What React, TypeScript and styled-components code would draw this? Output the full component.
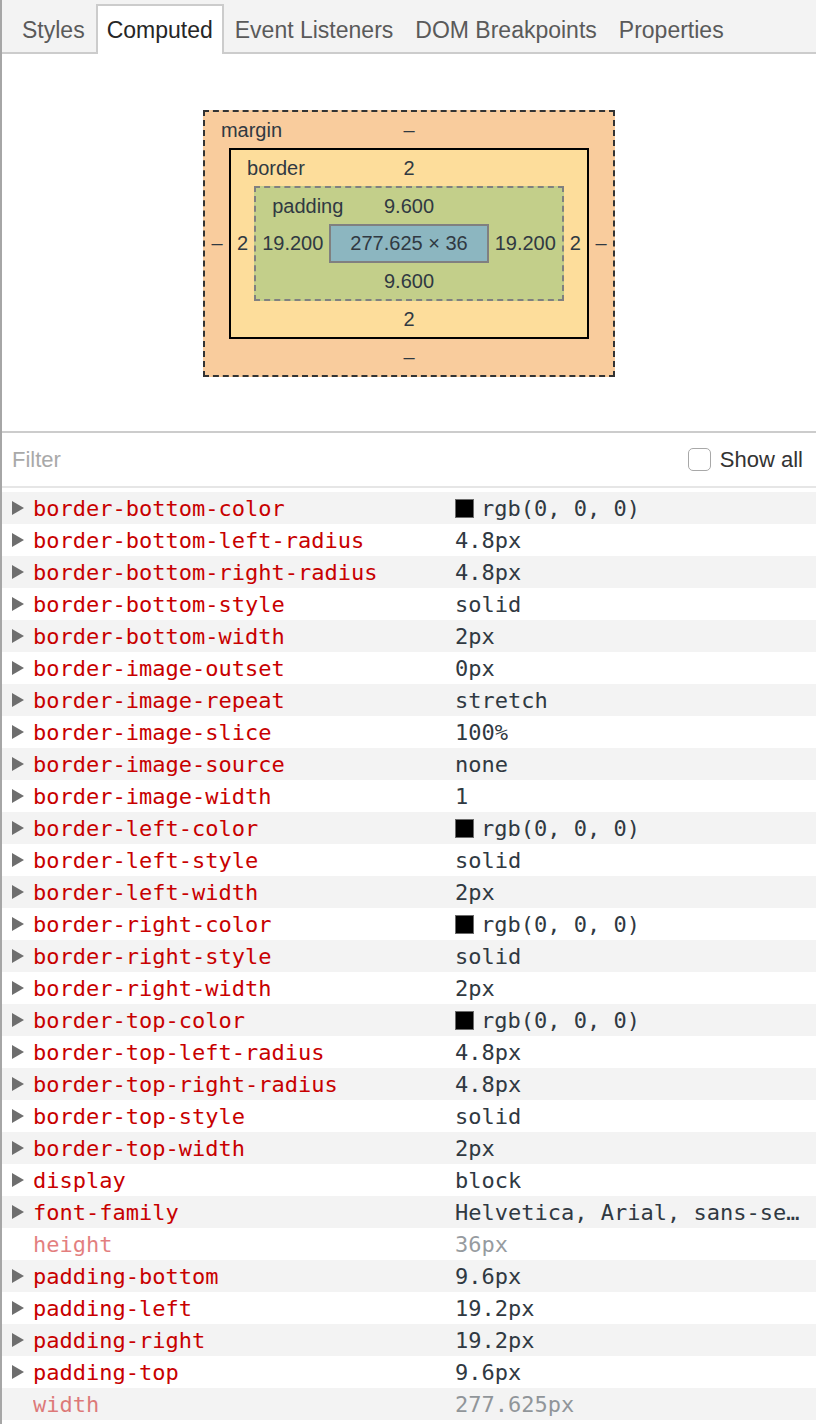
import styled, { createGlobalStyle } from "styled-components";

type BoxKind = "margin" | "border" | "padding";

type Property = {
  name: string;
  value: string;
  swatch?: string;
  inherited?: boolean;
};

const GlobalStyle = createGlobalStyle`
  body {
    margin: 0;
    background: #ffffff;
  }
  * {
    box-sizing: border-box;
  }
`;

const Panel = styled.div`
  border-left: 2px solid #a6a6a6;
  min-height: 1424px;
  background: #ffffff;
  font-family: "Liberation Sans", Arial, sans-serif;
  color: #303942;
`;

const TabBar = styled.div`
  display: flex;
  align-items: flex-end;
  height: 54px;
  padding-left: 9px;
  background: #f3f3f3;
  border-bottom: 2px solid #cccccc;
`;

const Tab = styled.div<{ $active?: boolean }>`
  height: 50px;
  margin-bottom: -2px;
  padding: 0 9px;
  display: flex;
  align-items: center;
  font-size: 23px;
  color: ${(p) => (p.$active ? "#262626" : "#5a5a5a")};
  background: ${(p) => (p.$active ? "#ffffff" : "transparent")};
  border: 2px solid ${(p) => (p.$active ? "#cccccc" : "transparent")};
  border-bottom: none;
`;

const BoxModelSection = styled.section`
  display: flex;
  justify-content: center;
  padding: 56px 0 54px;
  border-bottom: 2px solid #cccccc;
`;

const boxStyles: Record<BoxKind, string> = {
  margin: "background: #f9cc9d; border: 2px dashed #333333;",
  border: "background: #fddd9b; border: 2px solid #000000;",
  padding: "background: #c3cf8a; border: 2px dashed #808080;",
};

const Box = styled.div<{ $kind: BoxKind }>`
  display: flex;
  flex-direction: column;
  font-size: 20px;
  color: #303942;
  ${(p) => boxStyles[p.$kind]}
`;

const EdgeRow = styled.div`
  display: grid;
  grid-template-columns: 1fr auto 1fr;
  align-items: center;
  height: 36px;
  padding: 0 16px;
`;

const BoxLabel = styled.span`
  justify-self: start;
`;

const MiddleRow = styled.div`
  display: flex;
  align-items: center;
`;

const SideValue = styled.span<{ $pad?: number }>`
  padding: 0 ${(p) => p.$pad ?? 6}px;
`;

const Content = styled.div`
  height: 39px;
  display: flex;
  align-items: center;
  padding: 0 19px;
  background: #8cb6c0;
  border: 2px solid #808080;
`;

const FilterRow = styled.div`
  display: flex;
  align-items: center;
  justify-content: space-between;
  height: 55px;
  padding: 0 13px 0 10px;
  border-bottom: 2px solid #e6e6e6;
  font-size: 22px;
`;

const FilterInput = styled.span`
  color: #a9a9a9;
`;

const ShowAll = styled.label`
  display: flex;
  align-items: center;
  gap: 9px;
  color: #333333;
`;

const Checkbox = styled.span`
  width: 23px;
  height: 23px;
  border: 1.5px solid #a8a8a8;
  border-radius: 5px;
  background: #ffffff;
`;

const List = styled.div`
  padding-top: 4px;
`;

const Row = styled.div<{ $odd: boolean }>`
  display: flex;
  align-items: center;
  height: 32px;
  padding: 0 12px 0 10px;
  background: ${(p) => (p.$odd ? "#ffffff" : "#f3f3f3")};
  font-family: "DejaVu Sans Mono", "Liberation Mono", monospace;
  font-size: 22px;
`;

const Arrow = styled.span`
  width: 21px;
  flex: none;
  display: flex;
  align-items: center;
`;

const Name = styled.span<{ $inherited?: boolean }>`
  width: 422px;
  flex: none;
  color: #c80000;
  opacity: ${(p) => (p.$inherited ? 0.5 : 1)};
`;

const Value = styled.span<{ $inherited?: boolean }>`
  flex: 1;
  min-width: 0;
  display: flex;
  align-items: center;
  white-space: nowrap;
  overflow: hidden;
  color: #303942;
  opacity: ${(p) => (p.$inherited ? 0.5 : 1)};
`;

const ValueText = styled.span`
  overflow: hidden;
  text-overflow: ellipsis;
`;

const Swatch = styled.span`
  width: 19px;
  height: 19px;
  flex: none;
  margin-right: 7px;
  border: 1px solid #6b6b6b;
`;

const tabs = ["Styles", "Computed", "Event Listeners", "DOM Breakpoints", "Properties"];

const black = "#000000";

const properties: Property[] = [
  { name: "border-bottom-color", value: "rgb(0, 0, 0)", swatch: black },
  { name: "border-bottom-left-radius", value: "4.8px" },
  { name: "border-bottom-right-radius", value: "4.8px" },
  { name: "border-bottom-style", value: "solid" },
  { name: "border-bottom-width", value: "2px" },
  { name: "border-image-outset", value: "0px" },
  { name: "border-image-repeat", value: "stretch" },
  { name: "border-image-slice", value: "100%" },
  { name: "border-image-source", value: "none" },
  { name: "border-image-width", value: "1" },
  { name: "border-left-color", value: "rgb(0, 0, 0)", swatch: black },
  { name: "border-left-style", value: "solid" },
  { name: "border-left-width", value: "2px" },
  { name: "border-right-color", value: "rgb(0, 0, 0)", swatch: black },
  { name: "border-right-style", value: "solid" },
  { name: "border-right-width", value: "2px" },
  { name: "border-top-color", value: "rgb(0, 0, 0)", swatch: black },
  { name: "border-top-left-radius", value: "4.8px" },
  { name: "border-top-right-radius", value: "4.8px" },
  { name: "border-top-style", value: "solid" },
  { name: "border-top-width", value: "2px" },
  { name: "display", value: "block" },
  { name: "font-family", value: "Helvetica, Arial, sans-serif" },
  { name: "height", value: "36px", inherited: true },
  { name: "padding-bottom", value: "9.6px" },
  { name: "padding-left", value: "19.2px" },
  { name: "padding-right", value: "19.2px" },
  { name: "padding-top", value: "9.6px" },
  { name: "width", value: "277.625px", inherited: true },
];

const Triangle = () => (
  <svg width="12" height="14" viewBox="0 0 12 14">
    <polygon points="0,0 12,7 0,14" fill="#6e6e6e" />
  </svg>
);

const BoxModel = () => (
  <Box $kind="margin">
    <EdgeRow>
      <BoxLabel>margin</BoxLabel>
      <span>–</span>
    </EdgeRow>
    <MiddleRow>
      <SideValue $pad={6.5}>–</SideValue>
      <Box $kind="border">
        <EdgeRow>
          <BoxLabel>border</BoxLabel>
          <span>2</span>
        </EdgeRow>
        <MiddleRow>
          <SideValue>2</SideValue>
          <Box $kind="padding">
            <EdgeRow>
              <BoxLabel>padding</BoxLabel>
              <span>9.600</span>
            </EdgeRow>
            <MiddleRow>
              <SideValue>19.200</SideValue>
              <Content>277.625 × 36</Content>
              <SideValue>19.200</SideValue>
            </MiddleRow>
            <EdgeRow>
              <span />
              <span>9.600</span>
            </EdgeRow>
          </Box>
          <SideValue>2</SideValue>
        </MiddleRow>
        <EdgeRow>
          <span />
          <span>2</span>
        </EdgeRow>
      </Box>
      <SideValue $pad={6.5}>–</SideValue>
    </MiddleRow>
    <EdgeRow>
      <span />
      <span>–</span>
    </EdgeRow>
  </Box>
);

const App = () => {
  return (
    <Panel>
      <GlobalStyle />
      <TabBar>
        {tabs.map((tab) => (
          <Tab key={tab} $active={tab === "Computed"}>
            {tab}
          </Tab>
        ))}
      </TabBar>

      <BoxModelSection>
        <BoxModel />
      </BoxModelSection>

      <FilterRow>
        <FilterInput>Filter</FilterInput>
        <ShowAll>
          <Checkbox />
          Show all
        </ShowAll>
      </FilterRow>

      <List>
        {properties.map((prop, i) => (
          <Row key={prop.name} $odd={i % 2 === 1}>
            <Arrow>{!prop.inherited && <Triangle />}</Arrow>
            <Name $inherited={prop.inherited}>{prop.name}</Name>
            <Value $inherited={prop.inherited}>
              {prop.swatch && <Swatch style={{ background: prop.swatch }} />}
              <ValueText>{prop.value}</ValueText>
            </Value>
          </Row>
        ))}
      </List>
    </Panel>
  );
};

export default App;
